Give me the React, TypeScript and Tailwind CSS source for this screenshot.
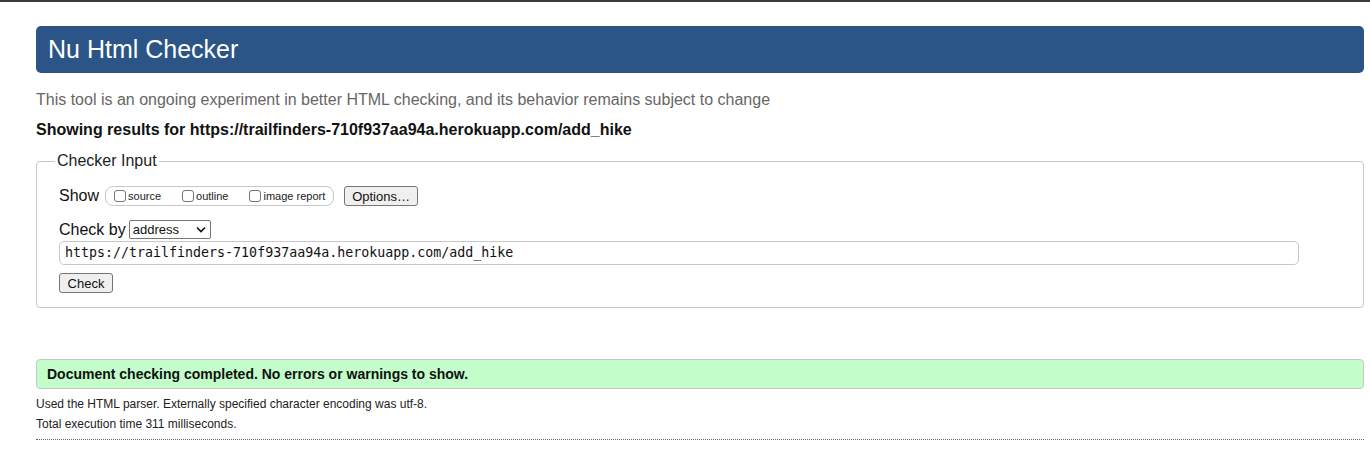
function Box({ label }: { label: string }) {
  return (
    <span className="flex items-center">
      <span className="w-[12px] h-[12px] border border-[#767676] rounded-[3px] bg-white" />
      <span className="ml-[2px] text-[11px] text-[#222]">{label}</span>
    </span>
  );
}

export default function App() {
  return (
    <div className="w-[1370px] h-[452px] bg-white font-['Liberation_Sans',Arial,sans-serif] text-[#111] overflow-hidden">
      <div className="h-[2px] bg-[#3a3a3a]" />
      <div className="ml-[36px] mr-[6px]">
        <h1 className="mt-[24px] h-[47px] rounded-[5px] bg-[#2b5587] pl-[12px] flex items-center text-[25px] text-white">
          Nu Html Checker
        </h1>
        <p className="mt-[18px] text-[16px] leading-[18px] text-[#666]">
          This tool is an ongoing experiment in better HTML checking, and its behavior remains subject to change
        </p>
        <p className="mt-[12px] text-[16px] leading-[18px] font-bold text-[#111]">
          Showing results for https://trailfinders-710f937aa94a.herokuapp.com/add_hike
        </p>
        <fieldset className="mt-[13px] border border-[#c8c8c8] rounded-[4px] pl-[22px] pr-[64px] pt-[16px] pb-[14px]">
          <legend className="ml-[-4px] px-[2px] text-[16px] leading-[18px] text-[#222]">Checker Input</legend>
          <div className="flex items-center h-[20px]">
            <span className="text-[16px] text-[#111]">Show</span>
            <div className="ml-[6px] h-[20px] w-[229px] border border-[#c8c8c8] rounded-[8px] flex items-center pl-[8px]">
              <Box label="source" />
              <span className="ml-[21px]"><Box label="outline" /></span>
              <span className="ml-[21px]"><Box label="image report" /></span>
            </div>
            <button className="ml-[10px] h-[20px] w-[74px] border border-[#767676] rounded-[3px] bg-[#efefef] text-[13px] text-[#111]">
              Options…
            </button>
          </div>
          <div className="mt-[14px] flex items-center h-[19px]">
            <span className="text-[16px] text-[#111]">Check by</span>
            <div className="ml-[3px] h-[19px] w-[82px] border border-[#767676] rounded-[2px] flex items-center justify-between pl-[3px] pr-[4px] text-[13px] text-[#111]">
              <span>address</span>
              <svg width="10" height="7" viewBox="0 0 10 7">
                <path d="M1 1.5 L5 5.5 L9 1.5" fill="none" stroke="#111" strokeWidth="1.6" />
              </svg>
            </div>
          </div>
          <div className="mt-[2px] h-[24px] border border-[#c8c8c8] rounded-[5px] flex items-center pl-[5px] font-['DejaVu_Sans_Mono',monospace] text-[13.3px] text-[#111]">
            https://trailfinders-710f937aa94a.herokuapp.com/add_hike
          </div>
          <button className="mt-[8px] h-[20px] w-[54px] border border-[#767676] rounded-[3px] bg-[#efefef] text-[13px] text-[#111] block">
            Check
          </button>
        </fieldset>
        <div className="mt-[51px] h-[30px] bg-[#c2fdca] border border-[#c8c8c8] rounded-[4px] flex items-center pl-[10px] text-[14px] font-bold text-[#111]">
          Document checking completed. No errors or warnings to show.
        </div>
        <p className="mt-[8px] text-[12px] leading-[14px] text-[#222]">
          Used the HTML parser. Externally specified character encoding was utf-8.
        </p>
        <p className="mt-[6px] text-[12px] leading-[14px] text-[#222]">
          Total execution time 311 milliseconds.
        </p>
        <div className="mt-[8px] border-b border-dotted border-[#666]" />
      </div>
    </div>
  );
}
